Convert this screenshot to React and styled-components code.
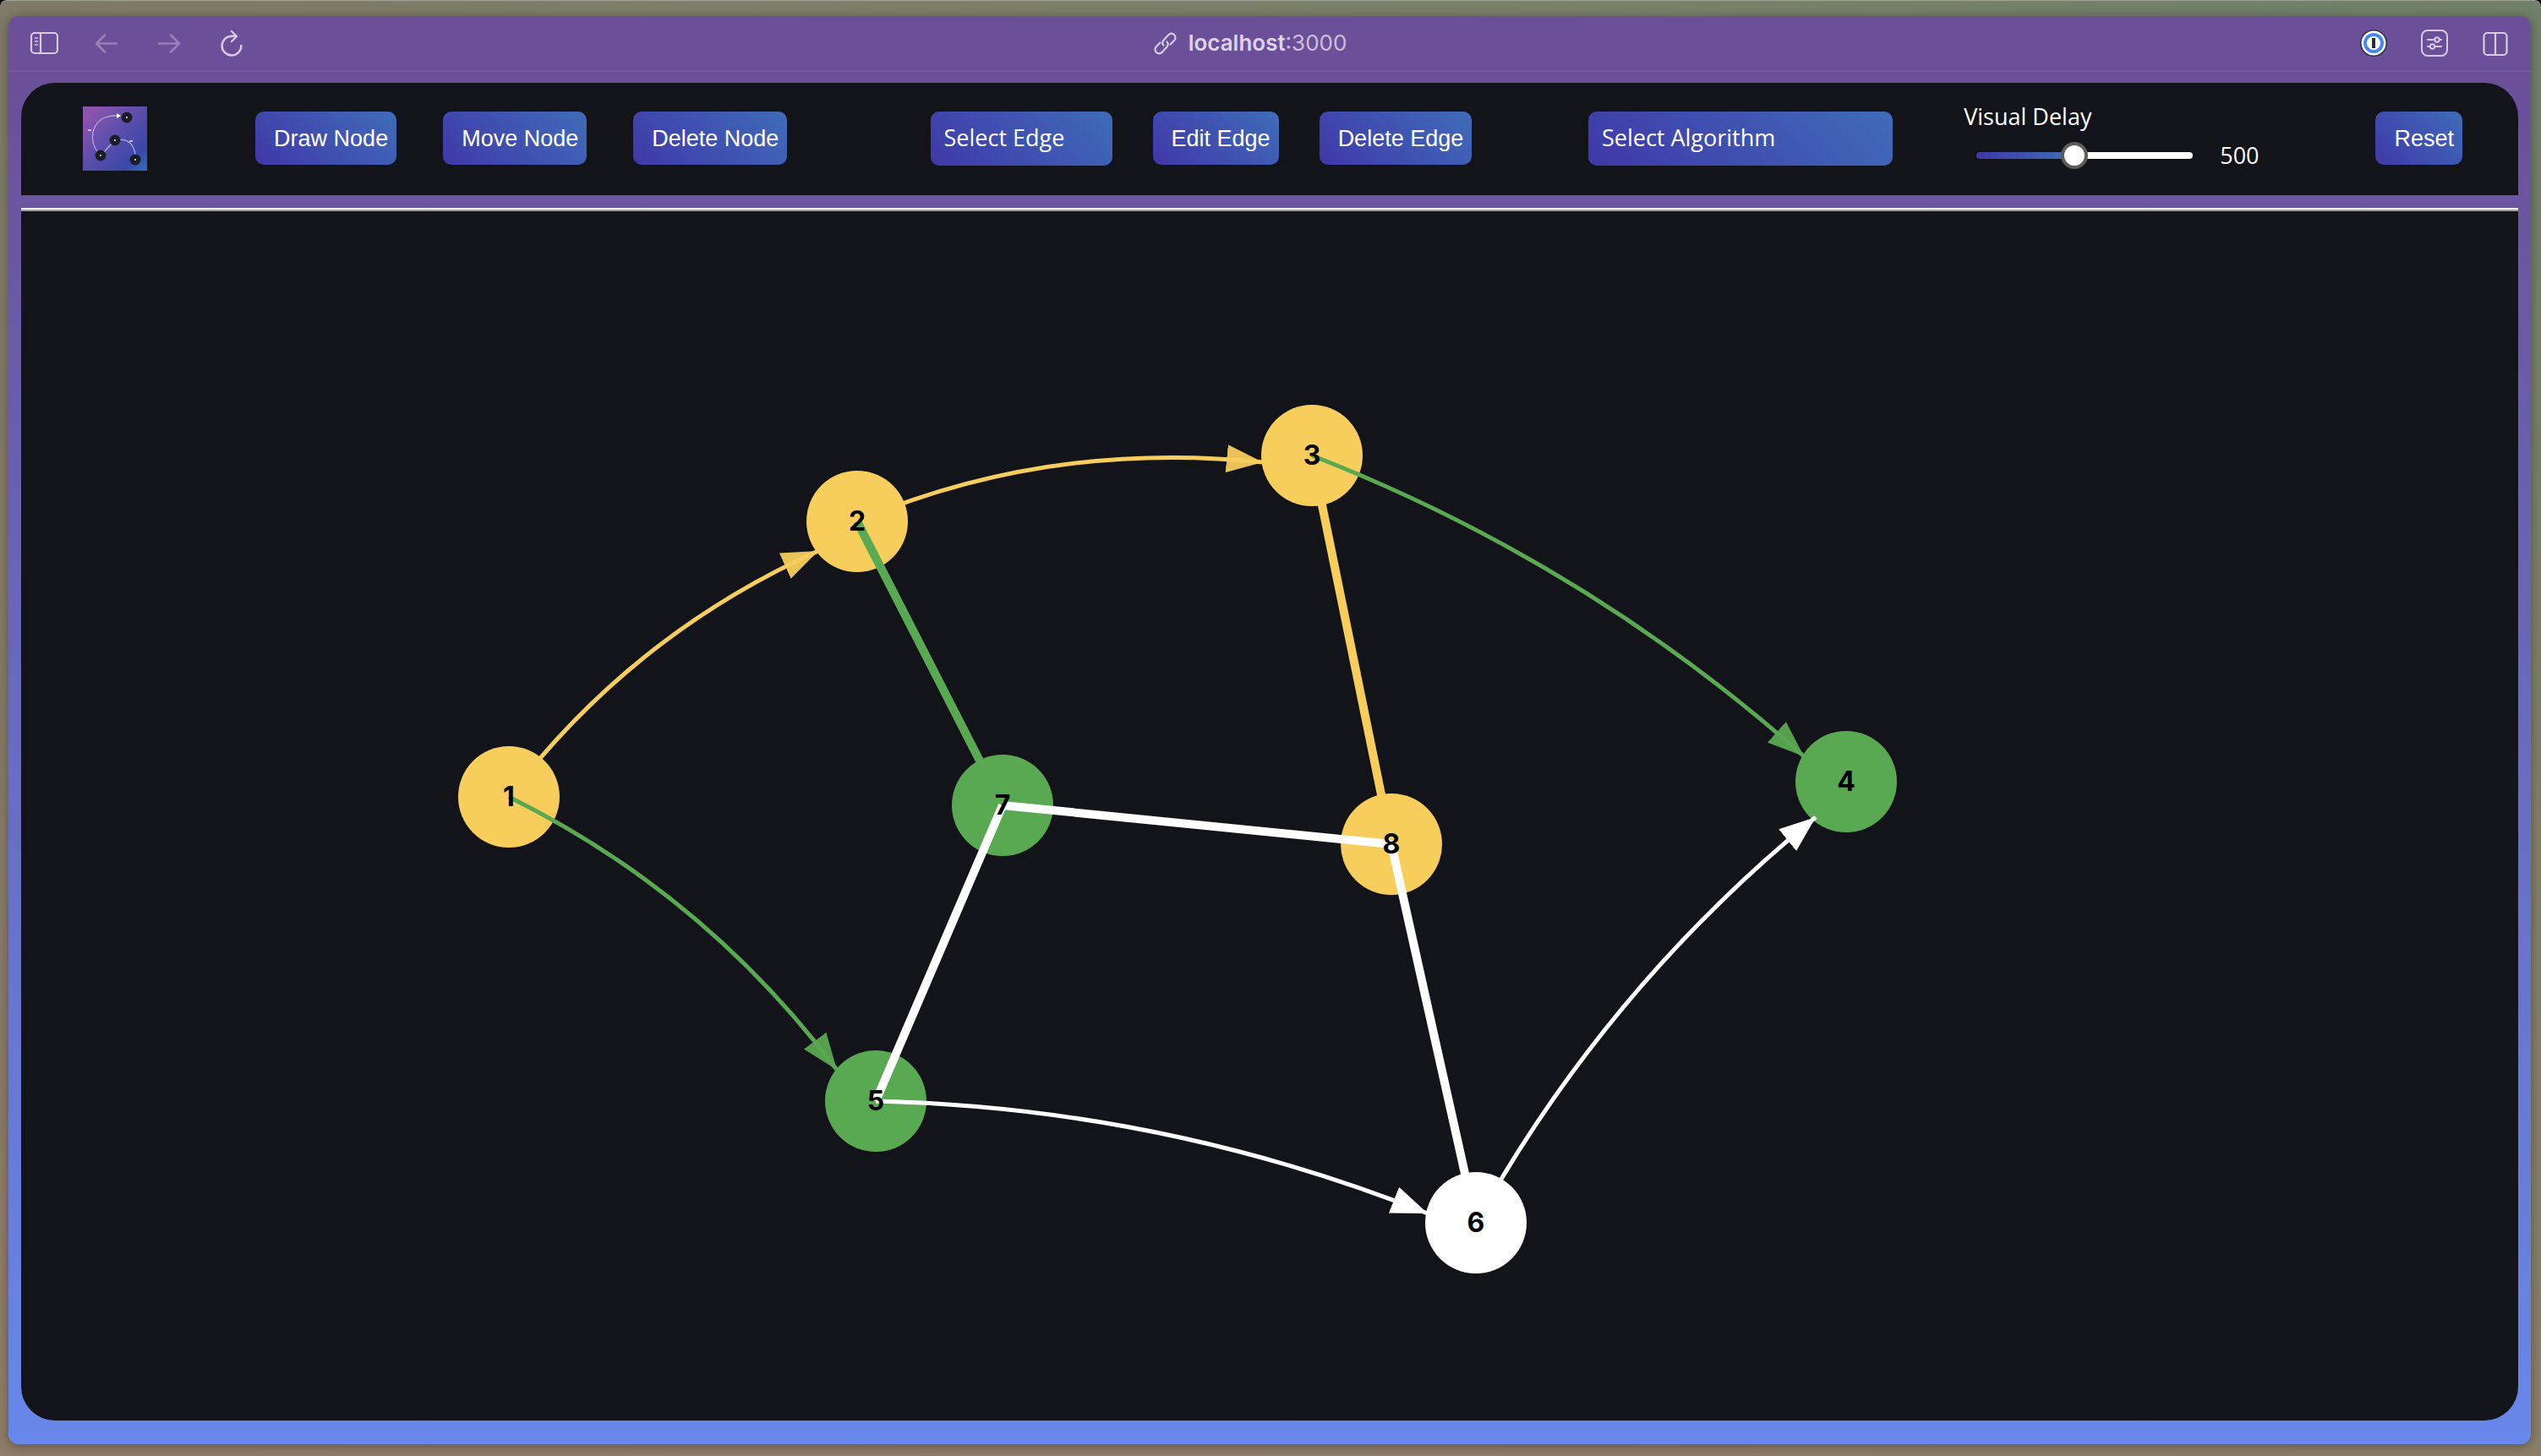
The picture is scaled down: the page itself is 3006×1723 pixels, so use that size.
import React, { useState } from "react";
import styled, { createGlobalStyle } from "styled-components";

const color = {
  panel: "#131419",
  yellow: "#f7ce5b",
  green: "#59a852",
  white: "#ffffff",
  indigo: "#4038a8",
  blue: "#3f6cb9",
};

const GlobalStyle = createGlobalStyle`
  * { box-sizing: border-box; }
  html, body, #root { height: 100%; margin: 0; }
  body { background: #000; }
`;

const Desktop = styled.div`
  height: 100%;
  padding: 19px 12px 14px 10px;
  border-radius: 8px 8px 0 0;
  box-shadow: inset 0 1px 0 #a3a696;
  background:
    linear-gradient(to bottom, transparent, rgba(148, 126, 104, 0.75)),
    linear-gradient(to right, #7f7b68, #7d816a 50%, #70806a);
`;

const Window = styled.div`
  height: 100%;
  display: flex;
  flex-direction: column;
  overflow: hidden;
  border-radius: 12px;
  background: linear-gradient(to bottom, #6b4f99 66px, #6688ea);
  box-shadow: 0 2px 14px rgba(0, 0, 0, 0.35);
`;

const TitleBar = styled.header`
  flex: none;
  height: 66px;
  padding: 0 25px;
  display: grid;
  grid-template-columns: 1fr auto 1fr;
  align-items: center;
  border-bottom: 2px solid #75599f;
  font-family: Inter, "Liberation Sans", sans-serif;
`;

const IconGroup = styled.div`
  display: flex;
  gap: ${(p) => (p.$end ? "38px" : "40px")};
  justify-content: ${(p) => (p.$end ? "flex-end" : "flex-start")};
`;

const IconButton = styled.button`
  width: 34px;
  height: 34px;
  padding: 0;
  border: 0;
  background: none;
  color: #d6cbe3;
  opacity: ${(p) => (p.disabled ? 0.4 : 1)};
  svg { display: block; }
`;

const Address = styled.a`
  display: flex;
  align-items: center;
  gap: 14px;
  margin-right: 46px;
  color: #ded4e8;
  font-size: 26px;
  line-height: 32px;
  font-weight: 600;
  text-decoration: none;
`;

const Port = styled.span`
  font-weight: 400;
  color: #cdc0dd;
`;

const Page = styled.main`
  flex: 1;
  min-height: 0;
  display: flex;
  flex-direction: column;
  gap: 15px;
  padding: 13px 15px 28px;
`;

const Toolbar = styled.nav`
  flex: none;
  height: 133px;
  padding: 0 66px 2px 73px;
  display: grid;
  grid-template-columns: 204fr 798fr 778fr 444fr 487fr auto;
  align-items: center;
  background: ${color.panel};
  border-radius: 40px 40px 0 0;
`;

const NodeTools = styled.div`
  display: flex;
  align-items: center;
  gap: 55px;
`;

const EdgeTools = styled(NodeTools)`
  gap: 48px;
`;

const Button = styled.button`
  height: 63px;
  padding: 0 10px 0 22px;
  border: 0;
  border-radius: 10px;
  background: linear-gradient(45deg, ${color.indigo}, ${color.blue});
  color: #fff;
  font: 27px/32px "Liberation Sans", Arial, sans-serif;
  white-space: nowrap;
`;

const Select = styled.select`
  appearance: none;
  width: ${(p) => p.$width};
  height: 64px;
  padding: 0 16px 2px;
  border: 0;
  border-radius: 10px;
  background: linear-gradient(45deg, ${color.indigo}, ${color.blue});
  color: #fff;
  font: 27px/36px "Open Sans", "Noto Sans", sans-serif;
`;

const Delay = styled.div`
  display: flex;
  flex-direction: column;
  gap: 10px;
  padding-bottom: 5px;
  color: #fff;
  font: 500 27px/36px "Open Sans", "Noto Sans", sans-serif;
`;

const DelayRow = styled.div`
  display: flex;
  align-items: center;
  gap: 32px;
  padding-left: 15px;
`;

const Slider = styled.input`
  appearance: none;
  width: 256px;
  height: 8px;
  margin: 0;
  border-radius: 4px;
  background: linear-gradient(
    to right,
    ${color.indigo},
    ${color.blue} ${(p) => p.$fill}%,
    #fff ${(p) => p.$fill}%
  );
  &::-webkit-slider-thumb {
    appearance: none;
    width: 32px;
    height: 32px;
    border: 4px solid #5c5c5c;
    border-radius: 50%;
    background: #fff;
  }
`;

const Canvas = styled.section`
  flex: 1;
  min-height: 0;
  border-top: 4px ridge #f2f2f2;
  border-radius: 0 0 40px 40px;
  background: ${color.panel};
  svg { display: block; width: 100%; height: 100%; }
`;

const NodeLabel = styled.text`
  font: 700 32px Inter, "Liberation Sans", sans-serif;
  text-anchor: middle;
  fill: #000;
`;

const nodes = [
  { id: 1, x: 602, y: 943, tone: "yellow" },
  { id: 2, x: 1014, y: 617, tone: "yellow" },
  { id: 3, x: 1552, y: 539, tone: "yellow" },
  { id: 8, x: 1646, y: 999, tone: "yellow" },
  { id: 7, x: 1186, y: 953, tone: "green" },
  { id: 5, x: 1036, y: 1303, tone: "green" },
  { id: 4, x: 2184, y: 925, tone: "green" },
  { id: 6, x: 1746, y: 1447, tone: "white" },
];

const edges = [
  { tone: "yellow", d: "M602 943Q748 751 968 652", directed: true },
  { tone: "yellow", d: "M1014 617Q1238 521 1494 547", directed: true },
  { tone: "yellow", d: "M1552 539L1646 999" },
  { tone: "green", d: "M1014 617L1186 953" },
  { tone: "green", d: "M602 943Q834 1058 990 1266", directed: true },
  { tone: "green", d: "M1552 539Q1875 665 2134 895", directed: true },
  { tone: "white", d: "M1186 953L1646 999" },
  { tone: "white", d: "M1186 953L1036 1303" },
  { tone: "white", d: "M1646 999L1746 1447" },
  { tone: "white", d: "M1036 1303Q1375 1311 1689 1436", directed: true },
  { tone: "white", d: "M1746 1447Q1901 1168 2148 967", directed: true },
];

function Edges({ tone }) {
  return edges
    .filter((e) => e.tone === tone)
    .map((e) => (
      <path
        key={e.d}
        d={e.d}
        fill="none"
        stroke={color[tone]}
        strokeWidth={e.directed ? 5 : 10}
        markerEnd={e.directed ? `url(#arrow-${tone})` : undefined}
      />
    ));
}

function Discs({ tone }) {
  return nodes
    .filter((n) => n.tone === tone)
    .map((n) => <circle key={n.id} cx={n.x} cy={n.y} r="60" fill={color[tone]} />);
}

function Graph() {
  return (
    <svg viewBox="25 250 2954 1431" role="img" aria-label="Graph with eight nodes">
      <defs>
        {["yellow", "green", "white"].map((tone) => (
          <marker
            key={tone}
            id={`arrow-${tone}`}
            markerUnits="userSpaceOnUse"
            markerWidth="43"
            markerHeight="33"
            refX="43"
            refY="16.5"
            orient="auto"
          >
            <path d="M0 0L43 16.5L0 33z" fill={color[tone]} opacity={tone === "white" ? 1 : 0.94} />
          </marker>
        ))}
      </defs>
      <Edges tone="yellow" />
      <Discs tone="yellow" />
      <Edges tone="green" />
      <Discs tone="green" />
      <Discs tone="white" />
      <Edges tone="white" />
      {nodes.map((n) => (
        <NodeLabel key={n.id} x={n.x} y={n.y + 11}>
          {n.id}
        </NodeLabel>
      ))}
    </svg>
  );
}

function Icon({ children, width = 2 }) {
  return (
    <svg
      width="34"
      height="34"
      viewBox="0 0 34 34"
      fill="none"
      stroke="currentColor"
      strokeWidth={width}
      strokeLinecap="round"
      strokeLinejoin="round"
      aria-hidden="true"
    >
      {children}
    </svg>
  );
}

function Logo() {
  return (
    <svg width="76" height="76" viewBox="0 0 76 76" role="img" aria-label="Graph visualizer">
      <defs>
        <linearGradient id="logo" x1="0" y1="0" x2="1" y2="1">
          <stop offset="0.1" stopColor="#8b55ae" />
          <stop offset="0.5" stopColor="#5a4dab" />
          <stop offset="0.8" stopColor="#3a48a8" />
          <stop offset="1" stopColor="#2d6fbd" />
        </linearGradient>
      </defs>
      <rect width="76" height="76" fill="url(#logo)" />
      <g fill="none" stroke="#cfc4e8" strokeWidth="1.2" opacity="0.85">
        <path d="M17 53C6 39 10 9 42 11M25 54L34 44M44 39.5C54 38 61 47 62 57" />
      </g>
      <path d="M40 8L45 11L40 14z" fill="#fff" />
      <path d="M6 28H10M55 41H59" stroke="#e6dff2" strokeWidth="1.5" />
      {[[52, 13], [38, 40], [21, 58], [62, 63]].map(([x, y]) => (
        <g key={x}>
          <circle cx={x} cy={y} r="6.5" fill="#1b1c28" />
          <rect x={x - 1} y={y - 1} width="2" height="2" fill="#b9b9c4" />
        </g>
      ))}
    </svg>
  );
}

export default function App() {
  const [delay, setDelay] = useState(500);

  return (
    <>
      <GlobalStyle />
      <Desktop>
        <Window>
          <TitleBar>
            <IconGroup>
              <IconButton aria-label="Sidebar">
                <Icon width={2.2}>
                  <rect x="2" y="5" width="31" height="24" rx="4" />
                  <path d="M13 5V29" />
                  <path d="M6.5 11H9.5M6.5 15H9.5M6.5 19H9.5" strokeWidth="1.5" />
                </Icon>
              </IconButton>
              <IconButton aria-label="Back" disabled>
                <Icon width={2.6}>
                  <path d="M29 17.5H5M15 7.5L5 17.5L15 27.5" />
                </Icon>
              </IconButton>
              <IconButton aria-label="Forward" disabled>
                <Icon width={2.6}>
                  <path d="M5 17.5H29M19 7.5L29 17.5L19 27.5" />
                </Icon>
              </IconButton>
              <IconButton aria-label="Reload">
                <Icon width={2.4}>
                  <path d="M22.5 8.7H17A11.4 11.4 0 1 0 28.4 20M17 3L23 9L17 15" />
                </Icon>
              </IconButton>
            </IconGroup>
            <Address href="#">
              <svg width="27" height="27" viewBox="0 0 27 27" fill="none" stroke="#d6cbe3" strokeWidth="2.2" strokeLinecap="round" aria-hidden="true">
                <path d="M15.5 11.5C17.5 13.5 17 16 15 18L10 23.5C8 26 5 26 3 24S1 19 3 17L7.5 12.5" />
                <path d="M11.500 15.500C9.500 13.500 10 11 12 9L17 3.500C19 1 22 1 24 3S26 8 24 10L19.500 14.500" />
              </svg>
              <span>
                localhost<Port>:3000</Port>
              </span>
            </Address>
            <IconGroup $end>
              <IconButton aria-label="Password manager">
                <svg width="34" height="34" viewBox="0 0 34 34" aria-hidden="true">
                  <circle cx="17" cy="17" r="16" fill="#2e2e38" />
                  <circle cx="17" cy="17" r="14.5" fill="#fff" />
                  <circle cx="17" cy="17" r="12" fill="#4389f5" />
                  <circle cx="17" cy="17" r="8" fill="#fff" />
                  <rect x="15" y="11" width="4" height="12" fill="#2b2b2b" />
                </svg>
              </IconButton>
              <IconButton aria-label="Page settings">
                <Icon>
                  <rect x="2" y="2" width="30" height="30" rx="7" />
                  <path d="M9 13H17M23 13H25M9 21H11M17 21H25" />
                  <circle cx="20" cy="13" r="2.7" />
                  <circle cx="14.5" cy="21" r="2.7" />
                </Icon>
              </IconButton>
              <IconButton aria-label="Tab overview">
                <Icon width={2.2}>
                  <rect x="3.5" y="5" width="27" height="26" rx="4" />
                  <path d="M17 5V31" />
                </Icon>
              </IconButton>
            </IconGroup>
          </TitleBar>
          <Page>
            <Toolbar>
              <Logo />
              <NodeTools>
                <Button>Draw Node</Button>
                <Button>Move Node</Button>
                <Button>Delete Node</Button>
              </NodeTools>
              <EdgeTools>
                <Select $width="215px" aria-label="Edge type">
                  <option>Select Edge</option>
                </Select>
                <Button>Edit Edge</Button>
                <Button>Delete Edge</Button>
              </EdgeTools>
              <Select $width="360px" aria-label="Algorithm">
                <option>Select Algorithm</option>
              </Select>
              <Delay>
                <label htmlFor="delay">Visual Delay</label>
                <DelayRow>
                  <Slider
                    id="delay"
                    type="range"
                    min="100"
                    max="1000"
                    value={delay}
                    $fill={(delay - 100) / 9}
                    onChange={(e) => setDelay(Number(e.target.value))}
                  />
                  <output htmlFor="delay">{delay}</output>
                </DelayRow>
              </Delay>
              <Button>Reset</Button>
            </Toolbar>
            <Canvas>
              <Graph />
            </Canvas>
          </Page>
        </Window>
      </Desktop>
    </>
  );
}
